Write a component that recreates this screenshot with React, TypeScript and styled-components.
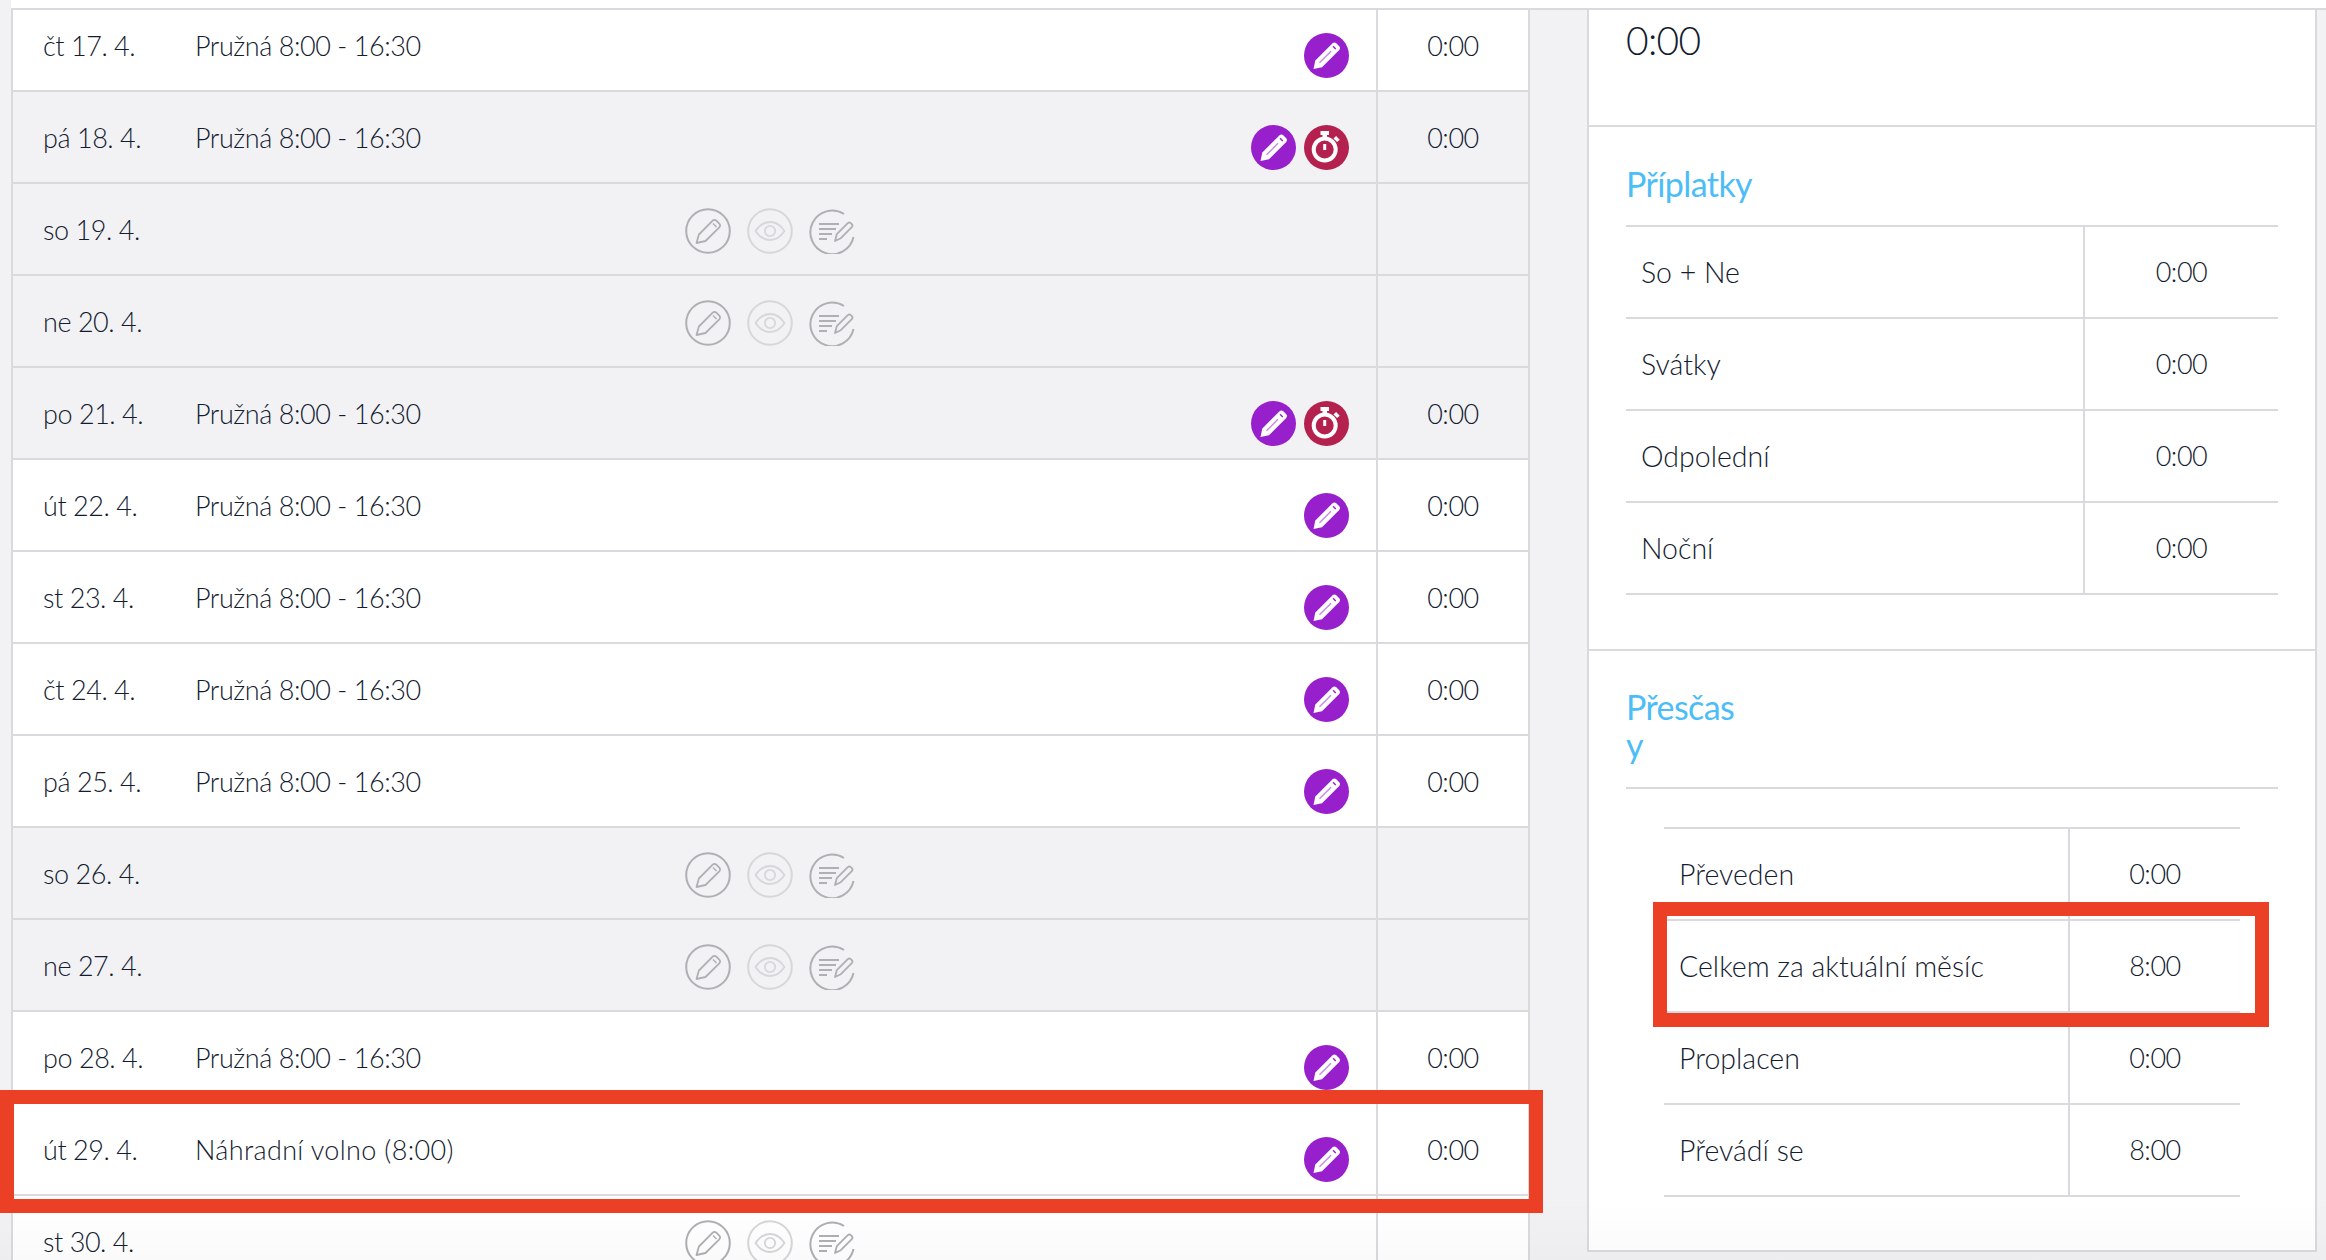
import React from 'react';
import styled, { createGlobalStyle } from 'styled-components';

const T = {
  page: '#f2f2f5',
  white: '#ffffff',
  line: '#d9dade',
  text: '#141c30',
  blue: '#4dbdf7',
  purple: '#981fcc',
  crimson: '#b5214f',
  red: '#ec4026',
  icon: '#afb0b5',
  iconFaint: '#d6d7da',
} as const;

const FONT = 'Lato, "Noto Sans", sans-serif';

const Global = createGlobalStyle`
  html, body { margin: 0; padding: 0; height: 100%; background: ${T.page}; }
  body { overflow: hidden; font-family: ${FONT}; font-weight: 300; color: ${T.text}; }
`;

const Page = styled.div`
  position: relative;
  height: 1260px;
  overflow: hidden;
`;

const TopStrip = styled.div`
  height: 8px;
  margin-left: 11px;
  background: ${T.white};
  border-bottom: 2px solid ${T.line};
`;

const Columns = styled.div`
  display: flex;
  align-items: flex-start;
  padding-left: 11px;
`;

const Table = styled.div`
  width: 1519px;
  flex: none;
  border-left: 2px solid ${T.line};
  border-right: 2px solid ${T.line};
  box-sizing: border-box;
`;

const Row = styled.div<{ $off?: boolean; $first?: boolean }>`
  position: relative;
  display: grid;
  grid-template-columns: 182px 490px 1fr 152px;
  height: ${({ $first }) => ($first ? 82 : 92)}px;
  box-sizing: border-box;
  border-bottom: 2px solid ${T.line};
  background: ${({ $off }) => ($off ? T.page : T.white)};
  font-size: 27px;
  letter-spacing: -0.45px;
  line-height: 40px;
`;

const DateCell = styled.div<{ $first?: boolean }>`
  padding: ${({ $first }) => ($first ? 16 : 26)}px 0 0 30px;
  white-space: nowrap;
`;

const ShiftCell = styled.div<{ $first?: boolean; $loose?: boolean }>`
  padding-top: ${({ $first }) => ($first ? 16 : 26)}px;
  letter-spacing: ${({ $loose }) => ($loose ? '0.35px' : '-0.45px')};
  white-space: nowrap;
`;

const Actions = styled.div<{ $first?: boolean }>`
  display: flex;
  justify-content: flex-end;
  gap: 8px;
  padding: ${({ $first }) => ($first ? 23 : 33)}px 27px 0 0;
`;

const GhostActions = styled.div`
  display: flex;
  gap: 16px;
  padding-top: 24px;
`;

const TotalCell = styled.div<{ $first?: boolean }>`
  border-left: 2px solid ${T.line};
  padding-top: ${({ $first }) => ($first ? 16 : 26)}px;
  text-align: center;
`;

const RoundButton = styled.span<{ $tone: 'purple' | 'crimson' }>`
  display: block;
  width: 45px;
  height: 45px;
  border-radius: 50%;
  background: ${({ $tone }) => ($tone === 'purple' ? T.purple : T.crimson)};
`;

const RowHighlight = styled.div`
  position: absolute;
  top: -14px;
  bottom: -19px;
  left: -13px;
  right: -15px;
  border: 14px solid ${T.red};
  z-index: 2;
  pointer-events: none;
`;

const Panel = styled.div`
  width: 730px;
  flex: none;
  margin-left: 57px;
  background: ${T.white};
  border-left: 2px solid ${T.line};
  border-right: 2px solid ${T.line};
  box-sizing: border-box;
`;

const Section = styled.section<{ $height: number }>`
  height: ${({ $height }) => $height}px;
  box-sizing: border-box;
  padding: 0 37px;
  border-bottom: 2px solid ${T.line};
`;

const BigValue = styled.div`
  font-size: 39px;
  letter-spacing: -0.7px;
  line-height: 60px;
`;

const Heading = styled.h2<{ $top: number; $narrow?: boolean }>`
  margin: 0;
  padding-top: ${({ $top }) => $top}px;
  width: ${({ $narrow }) => ($narrow ? '114px' : 'auto')};
  overflow-wrap: anywhere;
  color: ${T.blue};
  font-size: 34px;
  font-weight: 400;
  letter-spacing: -0.6px;
  line-height: 38px;
`;

const HeadingRule = styled.div<{ $top: number }>`
  height: 0;
  border-top: 2px solid ${T.line};
  margin-top: ${({ $top }) => $top}px;
`;

const SumRow = styled.div<{ $columns: string; $pad: number }>`
  position: relative;
  display: grid;
  grid-template-columns: ${({ $columns }) => $columns};
  height: 92px;
  box-sizing: border-box;
  border-bottom: 2px solid ${T.line};
  font-size: 27px;
  letter-spacing: -0.45px;
  line-height: 90px;
  & > :first-child {
    padding-left: ${({ $pad }) => $pad}px;
  }
`;

const SumLabel = styled.div`
  font-size: 28.5px;
  letter-spacing: 0;
  white-space: nowrap;
`;

const SumValue = styled.div`
  border-left: 2px solid ${T.line};
  text-align: center;
`;

const InnerTable = styled.div`
  margin: 38px 38px 0;
  border-top: 2px solid ${T.line};
`;

const SumHighlight = styled.div`
  position: absolute;
  top: -19px;
  bottom: -16px;
  left: -11px;
  right: -29px;
  border: 14px solid ${T.red};
  z-index: 2;
  pointer-events: none;
`;

const Fade = styled.div`
  position: absolute;
  left: 0;
  right: 0;
  bottom: 0;
  height: 60px;
  background: linear-gradient(rgba(0, 0, 0, 0), rgba(0, 0, 0, 0.018));
  z-index: 3;
  pointer-events: none;
`;

function PencilButton() {
  return (
    <RoundButton $tone="purple">
      <svg width="45" height="45" viewBox="0 0 45 45">
        <path
          d="M9.500 36l1.800-8.500L28.300 10.500a3 3 0 0 1 4.200 0l2.500 2.500a3 3 0 0 1 0 4.200L18 34.200z"
          fill="#fff"
        />
        <path d="M15.500 29.800L27 18.300" stroke={T.purple} strokeWidth="1.300" opacity="0.55" />
        <path d="M29 13.200l2.800 2.800" stroke={T.purple} strokeWidth="1.300" />
      </svg>
    </RoundButton>
  );
}

function TimerButton() {
  return (
    <RoundButton $tone="crimson">
      <svg width="45" height="45" viewBox="0 0 45 45">
        <circle cx="20.700" cy="24.500" r="11" fill="none" stroke="#fff" strokeWidth="4" />
        <path d="M16.500 6h8.500v4h-2v4h-4.500v-4h-2z" fill="#fff" />
        <path d="M20.700 19v6" stroke="#fff" strokeWidth="3" />
        <path d="M29.500 13.500l2.600-2.600 3.600 3.800-2.600 2.400z" fill="#fff" />
      </svg>
    </RoundButton>
  );
}

function GhostPencil() {
  return (
    <svg width="46" height="46" viewBox="0 0 46 46" fill="none" stroke={T.icon} strokeWidth="1.800">
      <circle cx="23" cy="23" r="21.800" strokeWidth="2" />
      <path
        d="M11.500 35l2.400-8.500 13.800-13.800a2.500 2.500 0 0 1 3.600 0l3 3a2.500 2.500 0 0 1 0 3.600L20.500 33z"
        strokeLinejoin="round"
      />
      <path d="M28 15.500l3.500 3.500" strokeWidth="1.400" />
    </svg>
  );
}

function GhostEye() {
  return (
    <svg width="46" height="46" viewBox="0 0 46 46" fill="none" stroke={T.iconFaint} strokeWidth="1.800">
      <circle cx="23" cy="23" r="21.800" strokeWidth="2" />
      <path d="M8.500 23C12.500 17 17.500 14 23 14s10.500 3 14.500 9c-4 6-9 9-14.500 9s-10.500-3-14.500-9z" />
      <circle cx="23" cy="23" r="5.200" />
    </svg>
  );
}

function GhostNote() {
  return (
    <svg width="46" height="46" viewBox="0 0 46 46" fill="none" stroke={T.icon} strokeWidth="2">
      <path d="M35 6A21.800 21.800 0 1 0 44.500 29" />
      <path d="M10 16h20M10 21h17M10 26h13M10 31h8" />
      <path
        d="M26 33l1.800-6.800 11-11a2.200 2.200 0 0 1 3 0l1 1a2.200 2.200 0 0 1 0 3l-11 11z"
        strokeWidth="1.800"
        strokeLinejoin="round"
      />
    </svg>
  );
}

type Day = {
  date: string;
  shift?: string;
  off?: boolean;
  timer?: boolean;
  ghost?: boolean;
  marked?: boolean;
};

const FLEX = 'Pružná 8:00 - 16:30';

const DAYS: Day[] = [
  { date: 'čt 17. 4.', shift: FLEX },
  { date: 'pá 18. 4.', shift: FLEX, off: true, timer: true },
  { date: 'so 19. 4.', off: true, ghost: true },
  { date: 'ne 20. 4.', off: true, ghost: true },
  { date: 'po 21. 4.', shift: FLEX, off: true, timer: true },
  { date: 'út 22. 4.', shift: FLEX },
  { date: 'st 23. 4.', shift: FLEX },
  { date: 'čt 24. 4.', shift: FLEX },
  { date: 'pá 25. 4.', shift: FLEX },
  { date: 'so 26. 4.', off: true, ghost: true },
  { date: 'ne 27. 4.', off: true, ghost: true },
  { date: 'po 28. 4.', shift: FLEX },
  { date: 'út 29. 4.', shift: 'Náhradní volno (8:00)', marked: true },
  { date: 'st 30. 4.', ghost: true },
];

const SURCHARGES = [
  ['So + Ne', '0:00'],
  ['Svátky', '0:00'],
  ['Odpolední', '0:00'],
  ['Noční', '0:00'],
];

const OVERTIME = [
  ['Převeden', '0:00'],
  ['Celkem za aktuální měsíc', '8:00'],
  ['Proplacen', '0:00'],
  ['Převádí se', '8:00'],
];

export default function App() {
  return (
    <Page>
      <Global />
      <TopStrip />
      <Columns>
        <Table>
          {DAYS.map((day, i) => {
            const first = i === 0;
            return (
              <Row key={day.date} $off={day.off} $first={first}>
                <DateCell $first={first}>{day.date}</DateCell>
                <ShiftCell $first={first} $loose={day.marked}>
                  {day.shift}
                </ShiftCell>
                {day.ghost ? (
                  <GhostActions>
                    <GhostPencil />
                    <GhostEye />
                    <GhostNote />
                  </GhostActions>
                ) : (
                  <Actions $first={first}>
                    <PencilButton />
                    {day.timer && <TimerButton />}
                  </Actions>
                )}
                <TotalCell $first={first}>{day.ghost ? '' : '0:00'}</TotalCell>
                {day.marked && <RowHighlight />}
              </Row>
            );
          })}
        </Table>
        <Panel>
          <Section $height={117}>
            <BigValue>0:00</BigValue>
          </Section>
          <Section $height={524}>
            <Heading $top={38}>Příplatky</Heading>
            <HeadingRule $top={22} />
            {SURCHARGES.map(([label, value]) => (
              <SumRow key={label} $columns="457px 1fr" $pad={15}>
                <SumLabel>{label}</SumLabel>
                <SumValue>{value}</SumValue>
              </SumRow>
            ))}
          </Section>
          <Section $height={601}>
            <Heading $narrow $top={37}>
              Přesčasy
            </Heading>
            <HeadingRule $top={23} />
            <InnerTable>
              {OVERTIME.map(([label, value], i) => (
                <SumRow key={label} $columns="404px 1fr" $pad={15}>
                  <SumLabel>{label}</SumLabel>
                  <SumValue>{value}</SumValue>
                  {i === 1 && <SumHighlight />}
                </SumRow>
              ))}
            </InnerTable>
          </Section>
        </Panel>
      </Columns>
      <Fade />
    </Page>
  );
}
